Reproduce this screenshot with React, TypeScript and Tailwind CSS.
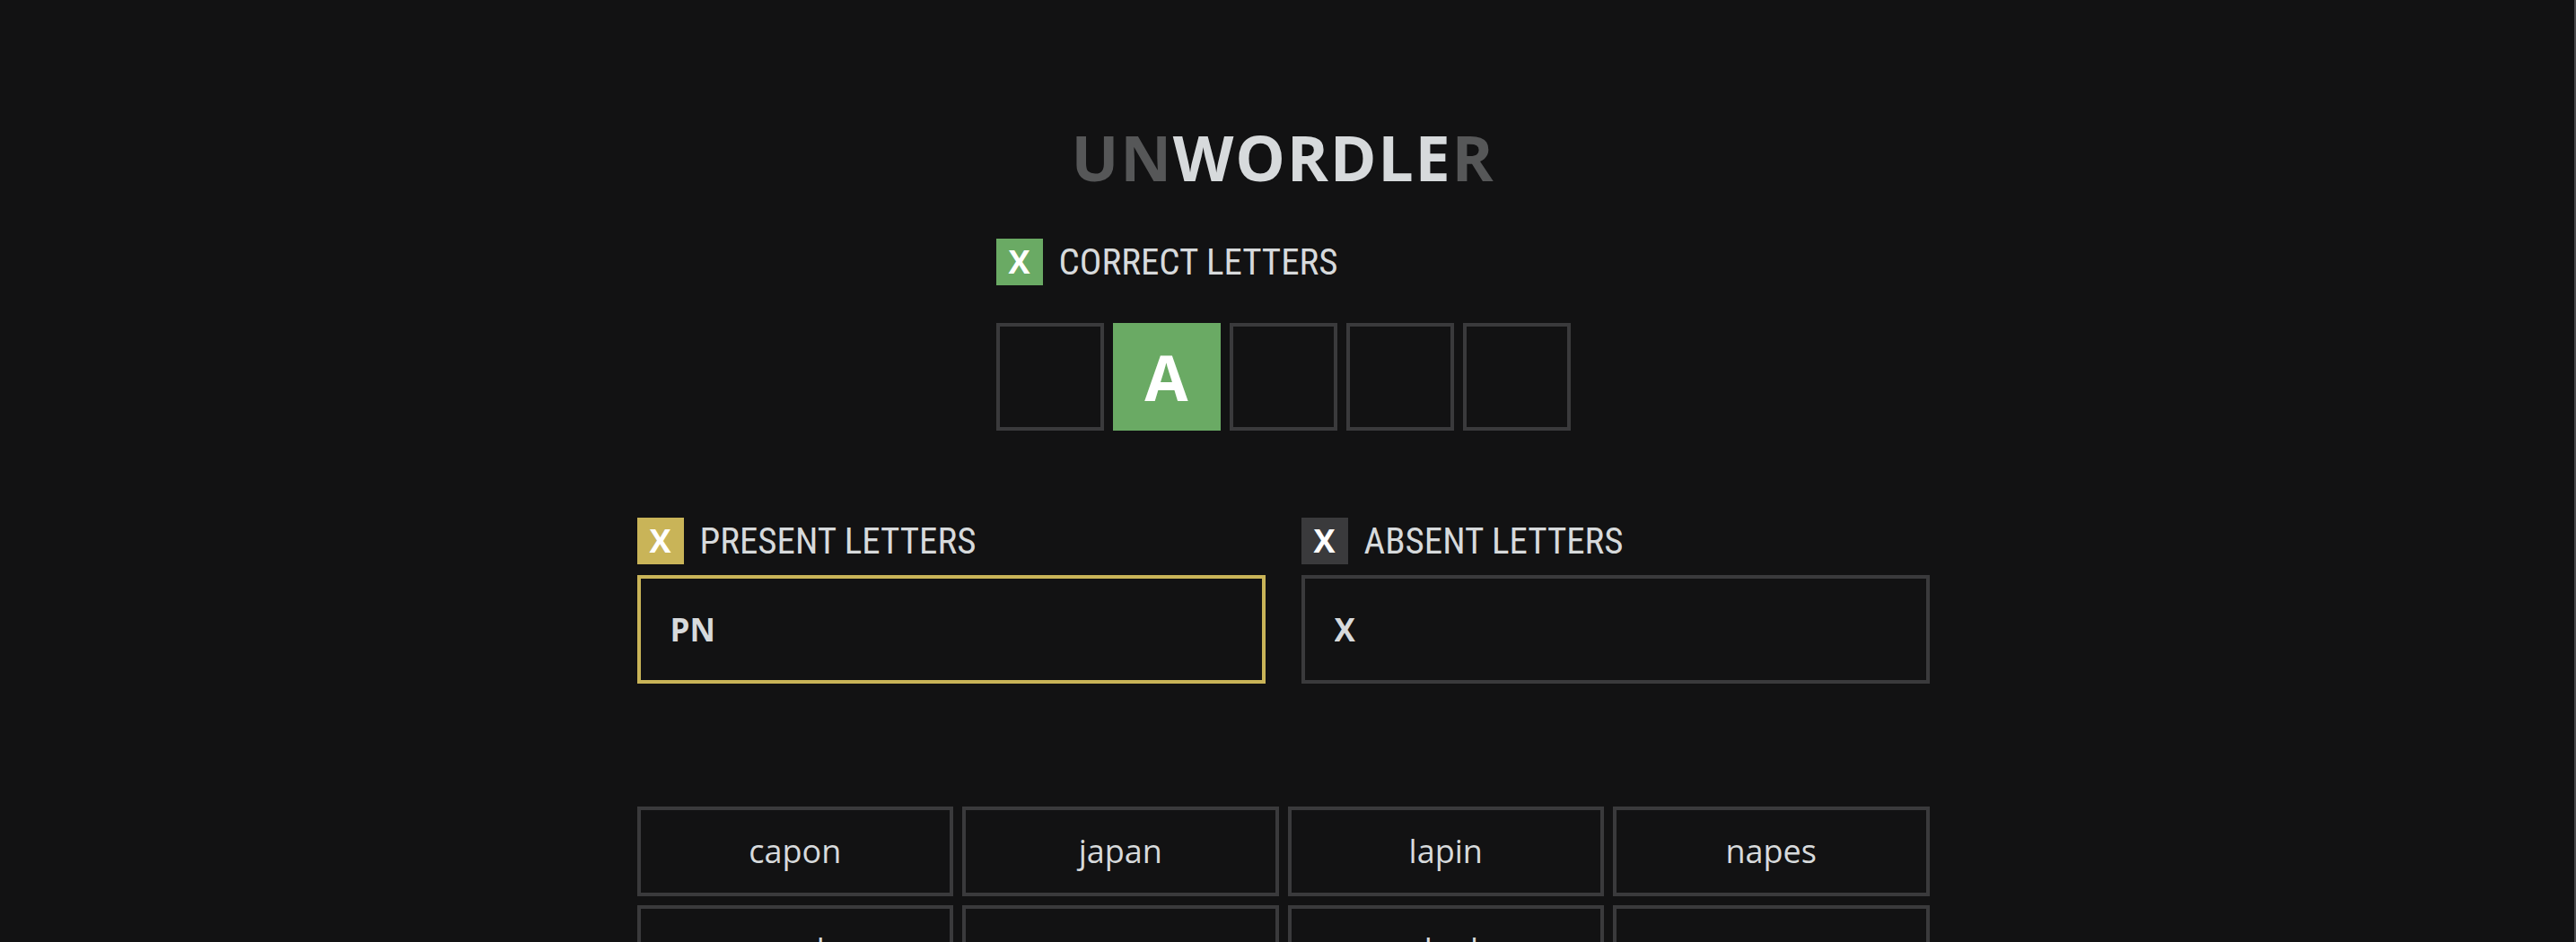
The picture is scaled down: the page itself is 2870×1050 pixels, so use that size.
import React from 'react';

const words = ['capon', 'japan', 'lapin', 'napes', 'panda', 'pagan', 'plank', 'spawn'];

const correct = ['', 'A', '', '', ''];

type TLabelProps = {
    color: string,
    text: string
}

const Label = ({color, text}: TLabelProps) => {
    return (
        <div className="flex items-center gap-[18px]">
            <div className={`flex h-[52px] w-[52px] items-center justify-center ${color} text-[36px] font-bold text-white`}>
                X
            </div>
            <span className="font-['Roboto',sans-serif] text-[41px] leading-none text-[#d7dadc] [font-stretch:75%]">
                {text}
            </span>
        </div>
    );
};

const App = () => {
    return (
        <div className="flex min-h-screen bg-[#121213] font-['Open_Sans',sans-serif] [font-stretch:88%]">
            <main className="flex flex-1 flex-col items-center pt-[140px]">
                <h1 className="text-[70px] font-bold leading-none tracking-[0.025em] text-[#d7dadc]">
                    <span className="text-[#565758]">UN</span>WORDLE<span className="text-[#565758]">R</span>
                </h1>

                <section className="mt-[56px] flex w-[640px] flex-col">
                    <Label color="bg-[#6aaa64]" text="CORRECT LETTERS"/>
                    <div className="mt-[42px] flex gap-[10px]">
                        {correct.map((letter, i) => (
                            <div
                                key={i}
                                className={letter
                                    ? 'flex h-[120px] w-[120px] items-center justify-center bg-[#6aaa64] text-[70px] font-bold text-white'
                                    : 'h-[120px] w-[120px] border-4 border-[#3a3a3c]'}
                            >
                                {letter}
                            </div>
                        ))}
                    </div>
                </section>

                <section className="mt-[97px] grid w-[1440px] grid-cols-2 gap-[40px]">
                    <div className="flex flex-col gap-[12px]">
                        <Label color="bg-[#c9b458]" text="PRESENT LETTERS"/>
                        <input
                            readOnly
                            value="PN"
                            className="h-[121px] w-full border-4 border-[#c9b458] bg-[#121213] pl-[33px] text-[35px] font-bold text-[#d7dadc] outline-none"
                        />
                    </div>
                    <div className="flex flex-col gap-[12px]">
                        <Label color="bg-[#3a3a3c]" text="ABSENT LETTERS"/>
                        <input
                            readOnly
                            value="X"
                            className="h-[121px] w-full border-4 border-[#3a3a3c] bg-[#121213] pl-[33px] text-[35px] font-bold text-[#d7dadc] outline-none"
                        />
                    </div>
                </section>

                <section className="mt-[137px] grid w-[1440px] grid-cols-4 gap-[10px]">
                    {words.map((word) => (
                        <div
                            key={word}
                            className="flex h-[100px] items-center justify-center border-4 border-[#3a3a3c] text-[36px] text-[#d7dadc]"
                        >
                            {word}
                        </div>
                    ))}
                </section>
            </main>
            <div className="w-[11px] border-r-2 border-[#4a4a4c]"/>
        </div>
    );
};

export default App;
